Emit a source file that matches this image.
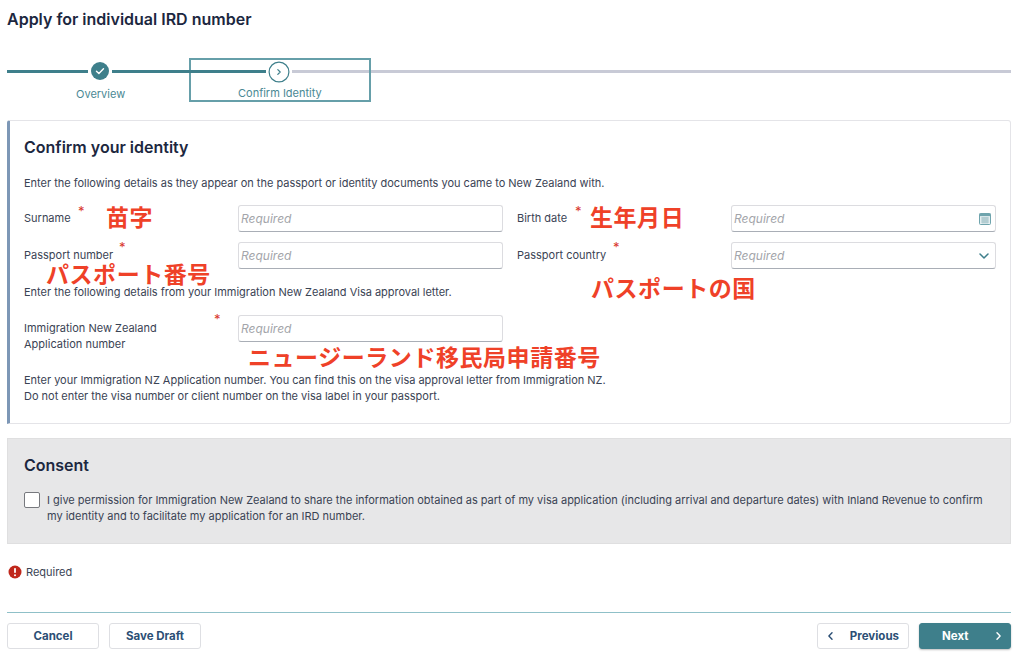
<template>
  <div class="page">
    <h1 class="title">Apply for individual IRD number</h1>

    <div class="stepper">
      <div class="step-done">
        <span class="seg teal first"></span>
        <svg class="dot" width="18" height="18" viewBox="0 0 18 18">
          <circle cx="9" cy="9" r="9" fill="#3e7f8b" />
          <path d="M5.5 9.3l2.4 2.3 4.6-4.8" fill="none" stroke="#fff" stroke-width="1.4" stroke-linecap="round" stroke-linejoin="round" />
        </svg>
        <span class="seg teal second"></span>
        <span class="step-label overview">Overview</span>
      </div>
      <div class="current">
        <svg class="ring" width="22" height="22" viewBox="0 0 22 22">
          <circle cx="11" cy="11" r="9.9" fill="#fff" stroke="#3e7f8b" stroke-width="1.2" />
          <path d="M9.8 8.6l2.4 2.4-2.4 2.4" fill="none" stroke="#3e7f8b" stroke-width="1.2" stroke-linecap="round" stroke-linejoin="round" />
        </svg>
        <span class="step-label confirm">Confirm Identity</span>
      </div>
      <span class="seg gray"></span>
    </div>

    <section class="card">
      <h2 class="heading">Confirm your identity</h2>
      <p class="text intro">Enter the following details as they appear on the passport or identity documents you came to New Zealand with.</p>

      <div class="grid">
        <label class="field-label">
          <span class="star" style="left:54px;top:0">*</span>Surname
          <span class="note" style="left:82px;top:-4px">苗字</span>
        </label>
        <div class="input"><span class="ph">Required</span></div>
        <label class="field-label">
          <span class="star" style="left:58px;top:0">*</span>Birth date
          <span class="note" style="left:73px;top:-4px">生年月日</span>
        </label>
        <div class="input">
          <span class="ph">Required</span>
          <svg class="cal" width="12" height="12" viewBox="0 0 12 12">
            <rect x="0.5" y="0.5" width="11" height="11" rx="1" fill="#e4eef0" stroke="#6fa4ad" />
            <rect x="0.5" y="0.5" width="11" height="2.6" fill="#6fa4ad" />
            <path d="M2 5h8M2 7h8M2 9h8M4 4v6.5M6 4v6.5M8 4v6.5" stroke="#8fb4bb" stroke-width="0.7" fill="none" />
          </svg>
        </div>

        <label class="field-label">
          <span class="star" style="left:95px;top:-1px">*</span>Passport number
          <span class="note" style="left:22px;top:16px">パスポート番号</span>
        </label>
        <div class="input"><span class="ph">Required</span></div>
        <label class="field-label">
          <span class="star" style="left:96px;top:-1px">*</span>Passport country
          <span class="note" style="left:74px;top:30px">パスポートの国</span>
        </label>
        <div class="input">
          <span class="ph">Required</span>
          <svg class="chev" width="10" height="6" viewBox="0 0 10 6">
            <path d="M1 1l4 4 4-4" fill="none" stroke="#3e7f8b" stroke-width="1.5" stroke-linecap="round" stroke-linejoin="round" />
          </svg>
        </div>
      </div>

      <p class="text visa">Enter the following details from your Immigration New Zealand Visa approval letter.</p>

      <div class="grid single">
        <label class="field-label two">
          <span class="star" style="left:190px;top:-2px">*</span>Immigration New Zealand<br />Application number
        </label>
        <div class="input">
          <span class="ph">Required</span>
          <span class="note" style="left:9px;top:25px">ニュージーランド移民局申請番号</span>
        </div>
      </div>

      <p class="text help">Enter your Immigration NZ Application number. You can find this on the visa approval letter from Immigration NZ.<br />Do not enter the visa number or client number on the visa label in your passport.</p>
    </section>

    <section class="consent">
      <h2 class="heading">Consent</h2>
      <div class="check-row">
        <span class="checkbox"></span>
        <p class="text">I give permission for Immigration New Zealand to share the information obtained as part of my visa application (including arrival and departure dates) with Inland Revenue to confirm my identity and to facilitate my application for an IRD number.</p>
      </div>
    </section>

    <div class="error">
      <svg width="14" height="14" viewBox="0 0 14 14">
        <circle cx="7" cy="7" r="6.5" fill="#c0281c" />
        <rect x="6.1" y="3" width="1.8" height="5" rx="0.8" fill="#fff" />
        <circle cx="7" cy="10.2" r="1" fill="#fff" />
      </svg>
      <span class="text">Required</span>
    </div>

    <footer class="footer">
      <div class="btn-group">
        <button class="btn">Cancel</button>
        <button class="btn">Save Draft</button>
      </div>
      <div class="btn-group">
        <button class="btn with-icon">
          <svg width="5" height="8" viewBox="0 0 5 8"><path d="M4 .8L.9 4 4 7.2" fill="none" stroke="#2c4f75" stroke-width="1.4" stroke-linecap="round" stroke-linejoin="round" /></svg>
          <span>Previous</span>
        </button>
        <button class="btn with-icon primary">
          <span class="next-label">Next</span>
          <svg width="5" height="8" viewBox="0 0 5 8"><path d="M1 .8L4.1 4 1 7.2" fill="none" stroke="#fff" stroke-width="1.4" stroke-linecap="round" stroke-linejoin="round" /></svg>
        </button>
      </div>
    </footer>
  </div>
</template>

<style scoped>
.page {
  box-sizing: border-box;
  width: 1024px;
  height: 658px;
  padding: 0 13px 0 7px;
  overflow: hidden;
  background: #fff;
  font-family: Inter, "Noto Sans CJK JP", sans-serif;
  color: #3a4354;
}
.title {
  margin: 0;
  padding-top: 10px;
  font-size: 16px;
  line-height: 19px;
  font-weight: 600;
  color: #1c2740;
}
.stepper {
  display: flex;
  align-items: flex-start;
  height: 43px;
  margin-top: 29px;
}
.step-done {
  position: relative;
  display: flex;
  align-items: center;
  flex: none;
  width: 182px;
  height: 26px;
  gap: 3px;
}
.seg {
  display: block;
  height: 3px;
}
.seg.teal { background: #3e7f8b; }
.seg.first { width: 81px; }
.seg.second { width: 77px; }
.seg.gray { flex: 1; background: #c8cad6; margin-top: 11.5px; }
.dot { flex: none; }
.step-label {
  position: absolute;
  font-size: 11px;
  line-height: 14px;
  color: #4a8994;
  white-space: nowrap;
}
.overview { left: 69px; top: 29px; }
.current {
  position: relative;
  box-sizing: border-box;
  flex: none;
  width: 182px;
  height: 44px;
  border: 2px solid #669fa9;
}
.current::before {
  content: "";
  position: absolute;
  left: -2px;
  top: 10px;
  width: 77px;
  height: 3px;
  background: #3e7f8b;
}
.current::after {
  content: "";
  position: absolute;
  left: 101px;
  right: 0;
  top: 10px;
  height: 3px;
  background: #c8cad6;
}
.ring { position: absolute; left: 77px; top: 1px; z-index: 1; }
.confirm { left: 47px; top: 26px; }
.card {
  box-sizing: border-box;
  height: 304px;
  margin-top: 19px;
  padding: 16px 14px 0 14px;
  border: 1px solid #e4e4e8;
  border-left: 3px solid #7d97b6;
  border-radius: 3px 3px 3px 0;
}
.heading {
  margin: 0;
  font-size: 16px;
  line-height: 20px;
  font-weight: 600;
  color: #1c2740;
}
.text {
  margin: 0;
  font-size: 11px;
  line-height: 16px;
  letter-spacing: -0.015px;
  color: #3a4354;
}
.intro { margin-top: 18px; }
.grid {
  display: grid;
  grid-template-columns: 214px 265px 228px 265px;
  row-gap: 10px;
  width: 972px;
  margin-top: 14px;
}
.grid > :nth-child(3), .grid > :nth-child(7) { margin-left: 14px; }
.grid.single { margin-top: 15px; }
.field-label {
  position: relative;
  display: block;
  font-size: 11px;
  line-height: 27px;
  color: #3a4354;
}
.field-label.two { line-height: 16px; padding-top: 5px; }
.star {
  position: absolute;
  color: #d9362b;
  font-size: 13px;
  line-height: 13px;
}
.note {
  position: absolute;
  font-family: "Noto Sans CJK JP", sans-serif;
  font-size: 23px;
  line-height: 30px;
  font-weight: 700;
  color: #ef4128;
  white-space: nowrap;
  letter-spacing: 0.55px;
  font-style: normal;
}
.input {
  position: relative;
  box-sizing: border-box;
  display: flex;
  align-items: center;
  justify-content: space-between;
  height: 27px;
  padding: 0 4px 0 2px;
  border: 1px solid #dcdce0;
  border-bottom: 1px solid #a9aeb6;
  border-radius: 3px;
  background: #fff;
}
.ph {
  font-size: 12px;
  font-style: italic;
  color: #a3a5aa;
}
.chev { margin-right: 2px; }
.visa { margin-top: 15px; }
.help { margin-top: 20px; }
.consent {
  box-sizing: border-box;
  height: 106px;
  margin-top: 14px;
  padding: 16px 14px 0 16px;
  background: #e7e7e8;
  border: 1px solid #dfdfe0;
}
.check-row {
  display: flex;
  gap: 7px;
  margin-top: 17px;
}
.checkbox {
  flex: none;
  box-sizing: border-box;
  width: 16px;
  height: 16px;
  background: #fff;
  border: 1px solid #77797e;
  border-radius: 2px;
}
.error {
  display: flex;
  align-items: center;
  gap: 4px;
  height: 16px;
  margin-top: 20px;
  margin-left: 1px;
}
.footer {
  display: flex;
  justify-content: space-between;
  align-items: flex-start;
  box-sizing: border-box;
  height: 46px;
  margin-top: 32px;
  padding-top: 10px;
  border-top: 1px solid #8fc0c8;
}
.btn-group { display: flex; gap: 10px; }
.btn {
  box-sizing: border-box;
  width: 92px;
  height: 26px;
  padding: 0;
  font-family: inherit;
  font-size: 11.5px;
  font-weight: 700;
  color: #2c4f75;
  background: #fff;
  border: 1px solid #dedfe3;
  border-radius: 3px;
}
.btn.with-icon {
  display: flex;
  align-items: center;
  justify-content: space-between;
  padding: 0 9px 0 10px;
}
.primary {
  color: #fff;
  background: #3e7f8b;
  border-color: #3e7f8b;
  box-shadow: 0 1px 2px rgba(0, 0, 0, 0.25);
}
.next-label { margin-left: 12px; }
</style>
